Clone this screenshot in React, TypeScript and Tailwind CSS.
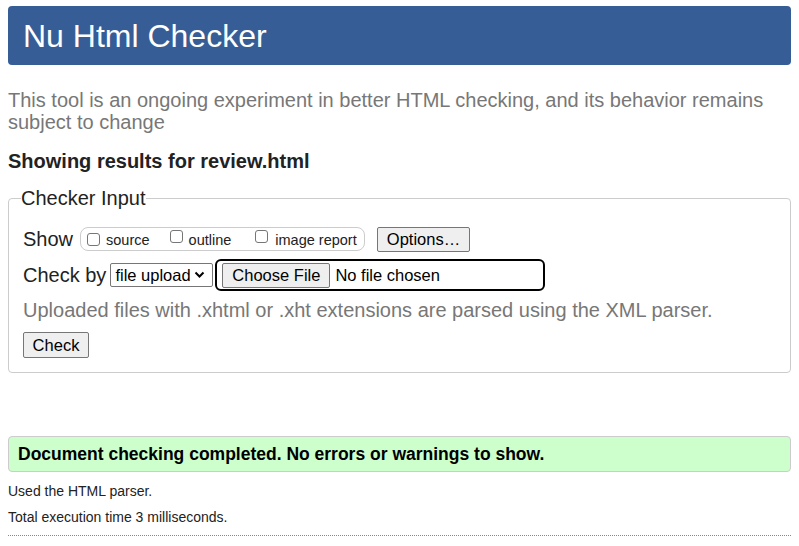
import React from "react";

function Checkbox() {
  return (
    <span className="inline-block w-[13px] h-[13px] border border-[#767676] rounded-[3px] bg-white shrink-0" />
  );
}

export default function App() {
  return (
    <div className="px-2 pt-[6px] bg-white min-h-[546px] text-black" style={{ fontFamily: '"Liberation Sans", Arial, sans-serif' }}>
      <div className="h-[59px] bg-[#365d95] rounded-[4px] flex items-center px-[15px]">
        <h1 className="text-[32px] leading-[36px] text-white">Nu Html Checker</h1>
      </div>
      <p className="mt-[24px] text-[20px] leading-[22px] text-[#777]">
        This tool is an ongoing experiment in better HTML checking, and its behavior remains subject to change
      </p>
      <h2 className="mt-[17px] text-[20px] leading-[22px] font-bold text-[#222]">Showing results for review.html</h2>
      <fieldset className="mt-[15px] border border-[#ccc] rounded-[4px] pl-[14px] pr-[14px] pb-[14px]">
        <legend className="text-[20px] leading-[23px] text-[#222] ml-[-2px]">Checker Input</legend>
        <div className="mt-[14px] h-[30px] flex items-center">
          <span className="text-[20px] leading-[23px] text-[#222]">Show</span>
          <div className="ml-[7px] w-[285px] h-[24px] border border-[#ccc] rounded-[8px] flex items-center pl-[6px] text-[14.5px] text-[#222]">
            <Checkbox />
            <span className="ml-[6px] mt-[3px]">source</span>
            <span className="ml-[20px]"><Checkbox /></span>
            <span className="ml-[6px] mt-[3px]">outline</span>
            <span className="ml-[24px]"><Checkbox /></span>
            <span className="ml-[7px] mt-[3px]">image report</span>
          </div>
          <button className="ml-[12px] w-[93px] h-[25px] bg-[#efefef] border border-[#767676] rounded-[2px] text-[16.5px] leading-[20px] text-black">
            Options…
          </button>
        </div>
        <div className="mt-[5px] h-[32px] flex items-center">
          <span className="text-[20px] leading-[23px] text-[#222]">Check by</span>
          <div className="ml-[4px] w-[103px] h-[24px] border border-[#767676] rounded-[2px] flex items-center pl-[4px] text-[16.5px] text-black">
            <span>file upload</span>
            <svg className="ml-[3px]" width="11" height="8" viewBox="0 0 11 8">
              <path d="M1.5 1.5 L5.5 5.5 L9.5 1.5" stroke="#000" strokeWidth="2" fill="none" />
            </svg>
          </div>
          <div className="ml-[2px] w-[330px] h-[32px] border-2 border-black rounded-[6px] flex items-center pl-[5px]">
            <button className="w-[108px] h-[25px] bg-[#efefef] border border-[#767676] rounded-[2px] text-[16.5px] leading-[20px] text-black">
              Choose File
            </button>
            <span className="ml-[5px] text-[16.5px] text-black">No file chosen</span>
          </div>
        </div>
        <p className="mt-[8px] text-[20px] leading-[23px] text-[#777]">
          Uploaded files with .xhtml or .xht extensions are parsed using the XML parser.
        </p>
        <button className="mt-[10px] w-[66px] h-[26px] bg-[#efefef] border border-[#767676] rounded-[2px] text-[16.5px] leading-[20px] text-black block">
          Check
        </button>
      </fieldset>
      <div className="mt-[63px] h-[36px] bg-[#ccffcc] border border-[#ccc] rounded-[4px] flex items-center px-[9px]">
        <span className="text-[17.5px] font-bold text-black">Document checking completed. No errors or warnings to show.</span>
      </div>
      <p className="mt-[11px] text-[14px] leading-[16px] text-[#222]">Used the HTML parser.</p>
      <p className="mt-[10px] text-[14px] leading-[16px] text-[#222]">Total execution time 3 milliseconds.</p>
      <div className="mt-[10px] border-t border-dotted border-[#888]" />
    </div>
  );
}
